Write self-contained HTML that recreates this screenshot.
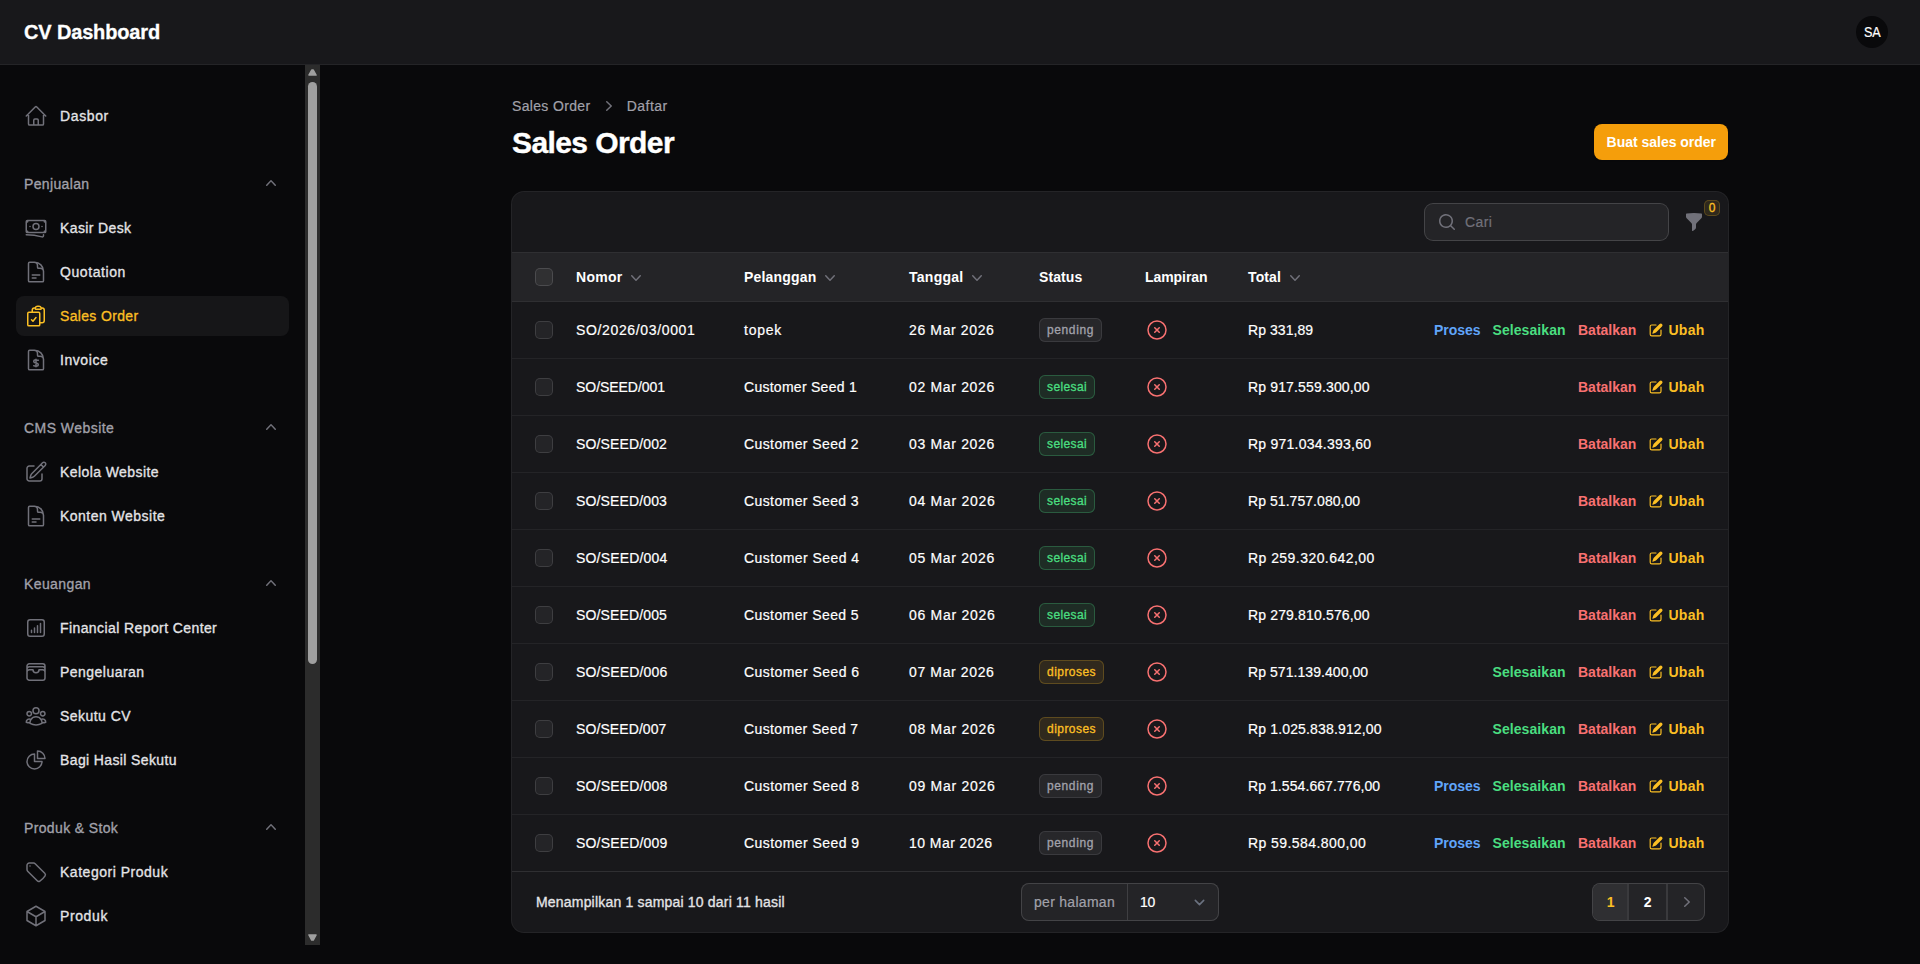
<!DOCTYPE html>
<html lang="id">
<head>
<meta charset="utf-8">
<title>Sales Order - CV Dashboard</title>
<style>
*{box-sizing:border-box;margin:0;padding:0}
html,body{width:1920px;height:964px;overflow:hidden;background:#09090b}
body{font-family:"Liberation Sans",sans-serif;font-size:14px;line-height:20px;color:#fff;position:relative;-webkit-text-stroke:.2px currentColor}
svg{display:block}
.t{display:inline-block;white-space:nowrap}
.md{-webkit-text-stroke:.32px currentColor}
.btn,.th,.a,.b7{-webkit-text-stroke:0}
.brand{-webkit-text-stroke:.3px currentColor}
.title{-webkit-text-stroke:.4px currentColor}

/* topbar */
.topbar{position:absolute;left:0;top:0;width:1920px;height:64px;background:#18181b;box-shadow:0 1px 0 0 #242427}
.brand{position:absolute;left:24px;top:20px;font-size:20px;line-height:24px;font-weight:700;color:#fff}
.avatar{position:absolute;left:1856px;top:16px;width:32px;height:32px;border-radius:50%;background:#09090b;color:#fff;font-size:14px;line-height:32px;text-align:center}

/* sidebar */
.sidebar{position:absolute;left:0;top:65px;width:305px;height:899px;background:#09090b}
.sb-track{position:absolute;left:305px;top:65px;width:15px;height:880px;background:#2c2c2c}
.sb-thumb{position:absolute;left:3px;top:17px;width:9px;height:582px;border-radius:5px;background:#9f9f9f}
.nav-item{position:absolute;left:16px;width:273px;height:40px;border-radius:8px}
.nav-item.active{background:#161618}
.nav-item svg{position:absolute;left:8px;top:8px;width:24px;height:24px;color:#71717a;fill:none;stroke:currentColor;stroke-width:1.5;stroke-linecap:round;stroke-linejoin:round}
.nav-item .t{position:absolute;left:44px;top:10px;color:#e4e4e7;font-weight:400}
.nav-item.active svg{color:#fbbf24}
.nav-item.active .t{color:#fbbf24}
.nav-group{position:absolute;left:16px;width:273px;height:40px}
.nav-group .t{position:absolute;left:8px;top:10px;color:#a1a1aa}
.nav-group svg{position:absolute;left:245px;top:9px;width:20px;height:20px;fill:#71717a}

/* main */
.crumbs{position:absolute;left:512px;top:96px;height:20px;color:#a1a1aa}
.crumbs .t{position:absolute;top:0}
.crumbs svg{position:absolute;top:0;width:20px;height:20px;fill:#71717a}
.title{position:absolute;left:512px;top:125px;font-size:30px;line-height:36px;font-weight:700;color:#fff}
.btn{position:absolute;left:1594px;top:124px;width:134px;height:36px;border-radius:8px;background:#f59e0b;color:#fff;font-weight:700;text-align:center;line-height:36px;box-shadow:0 1px 2px rgba(0,0,0,.05)}

.card{position:absolute;left:512px;top:192px;width:1216px;height:740px;border-radius:12px;background:#18181b;box-shadow:0 0 0 1px #242427}
.hline{position:absolute;left:0;width:1216px;height:1px;background:#242427}
.hline.s{background:#2f2f32}
.thead{position:absolute;left:0;top:61px;width:1216px;height:48px;background:#242427}
.search{position:absolute;left:913px;top:12px;width:243px;height:36px;border-radius:8px;background:#242427;box-shadow:0 0 0 1px #444447}
.search svg{position:absolute;left:12px;top:8px;width:20px;height:20px;fill:#71717a}
.search .t{position:absolute;left:40px;top:8px;color:#71717a;font-size:14px}
.filter{position:absolute;left:1172px;top:20px;width:20px;height:20px;fill:#71717a}
.fbadge{position:absolute;left:1192px;top:8px;width:16px;height:16px;border-radius:5px;background:#2f291c;box-shadow:inset 0 0 0 1px #5c4a1e;color:#fbbf24;font-size:12px;line-height:16px;text-align:center}
.cb{position:absolute;left:24px;width:16px;height:16px;border-radius:4px;background:#242427;box-shadow:0 0 0 1px #3e3e41}
.thead .cb{top:16px;background:#303032;box-shadow:0 0 0 1px #4b4b4e}
.th{position:absolute;top:14px;font-weight:700;color:#fff}
.thead svg{position:absolute;top:15px;width:20px;height:20px;fill:#71717a}
.row{position:absolute;left:0;width:1216px;height:56px}
.row .cb{top:20px}
.row .c{position:absolute;top:18px;color:#fff}
.badge{position:absolute;left:527px;top:16px;height:24px;border-radius:6px;font-size:12px;line-height:24px;padding:0 8px}
.b-gray{background:#27272a;color:#a1a1aa;box-shadow:inset 0 0 0 1px #3a3a3e}
.b-green{background:#1e2c25;color:#4ade80;box-shadow:inset 0 0 0 1px #2a5b3f}
.b-amber{background:#30291d;color:#fbbf24;box-shadow:inset 0 0 0 1px #5e4b1f}
.xc{position:absolute;left:633px;top:16px;width:24px;height:24px;fill:none;stroke:#f87171;stroke-width:1.5;stroke-linecap:round;stroke-linejoin:round}
.a{position:absolute;top:18px;font-weight:700}
.a.blue{color:#60a5fa}.a.green{color:#4ade80}.a.red{color:#f87171}.a.amber{color:#fbbf24}
.pen{position:absolute;left:1136px;top:20px;width:16px;height:16px;fill:#fbbf24}
.foot .t{position:absolute}
.perpage{position:absolute;left:509px;top:691px;width:198px;height:38px;border-radius:8px;background:#242427;box-shadow:inset 0 0 0 1px #434346}
.pager{position:absolute;left:1080px;top:691px;width:113px;height:38px;border-radius:8px;background:#242427;box-shadow:inset 0 0 0 1px #434346}
</style>
</head>
<body>
<div class="topbar">
<div class="brand"><span class="t" style="letter-spacing:-0.151px">CV Dashboard</span></div>
<div class="avatar"><span class="t" style="font-size:14px;transform:scaleX(.9)">SA</span></div>
</div>
<div class="sidebar">
<div class="nav-item" style="top:31px"><svg viewBox="0 0 24 24"><path d="M2.25 12l8.954-8.955c.44-.439 1.152-.439 1.591 0L21.75 12M4.5 9.75v10.125c0 .621.504 1.125 1.125 1.125H9.75v-4.875c0-.621.504-1.125 1.125-1.125h2.25c.621 0 1.125.504 1.125 1.125V21h4.125c.621 0 1.125-.504 1.125-1.125V9.75M8.25 21h8.25"/></svg><span class="t md" style="letter-spacing:0.627px">Dasbor</span></div>
<div class="nav-group" style="top:99px"><span class="t md" style="letter-spacing:0.347px">Penjualan</span><svg viewBox="0 0 20 20"><path fill-rule="evenodd" clip-rule="evenodd" d="M14.77 12.79a.75.75 0 01-1.06-.02L10 8.832 6.29 12.77a.75.75 0 11-1.08-1.04l4.25-4.5a.75.75 0 011.08 0l4.25 4.5a.75.75 0 01-.02 1.06z"/></svg></div>
<div class="nav-item" style="top:143px"><svg viewBox="0 0 24 24"><path d="M2.25 18.75a60.07 60.07 0 0115.797 2.101c.727.198 1.453-.342 1.453-1.096V18.75M3.75 4.5v.75A.75.75 0 013 6h-.75m0 0v-.375c0-.621.504-1.125 1.125-1.125H20.25M2.25 6v9m18-10.5v.75c0 .414.336.75.75.75h.75m-1.5-1.5h.375c.621 0 1.125.504 1.125 1.125v9.75c0 .621-.504 1.125-1.125 1.125h-.375m1.5-1.5H21a.75.75 0 00-.75.75v.75m0 0H3.75m0 0h-.375a1.125 1.125 0 01-1.125-1.125V15m1.5 1.5v-.75A.75.75 0 003 15h-.75M15 10.5a3 3 0 11-6 0 3 3 0 016 0zm3 0h.008v.008H18V10.5zm-12 0h.008v.008H6V10.5z"/></svg><span class="t md" style="letter-spacing:0.381px">Kasir Desk</span></div>
<div class="nav-item" style="top:187px"><svg viewBox="0 0 24 24"><path d="M19.5 14.25v-2.625a3.375 3.375 0 00-3.375-3.375h-1.5A1.125 1.125 0 0113.5 7.125v-1.5a3.375 3.375 0 00-3.375-3.375H8.25m0 12.75h7.5m-7.5 3H12M10.5 2.25H5.625c-.621 0-1.125.504-1.125 1.125v17.25c0 .621.504 1.125 1.125 1.125h12.75c.621 0 1.125-.504 1.125-1.125V11.25a9 9 0 00-9-9z"/></svg><span class="t md" style="letter-spacing:0.587px">Quotation</span></div>
<div class="nav-item active" style="top:231px"><svg viewBox="0 0 24 24"><path d="M11.35 3.836c-.065.21-.1.433-.1.664 0 .414.336.75.75.75h4.5a.75.75 0 00.75-.75 2.25 2.25 0 00-.1-.664m-5.8 0A2.251 2.251 0 0113.5 2.25H15c1.012 0 1.867.668 2.15 1.586m-5.8 0c-.376.023-.75.05-1.124.08C9.095 4.01 8.25 4.973 8.25 6.108V8.25m8.9-4.414c.376.023.75.05 1.124.08 1.131.094 1.976 1.057 1.976 2.192V16.5A2.25 2.25 0 0118 18.75h-2.25m-7.5-10.5H4.875c-.621 0-1.125.504-1.125 1.125v11.25c0 .621.504 1.125 1.125 1.125h9.75c.621 0 1.125-.504 1.125-1.125V18.75m-7.5-10.5h6.375c.621 0 1.125.504 1.125 1.125v9.375m-8.25-3l1.5 1.5 3-3.75"/></svg><span class="t md" style="letter-spacing:0.336px">Sales Order</span></div>
<div class="nav-item" style="top:275px"><svg viewBox="0 0 24 24"><path d="M19.5 14.25v-2.625a3.375 3.375 0 00-3.375-3.375h-1.5A1.125 1.125 0 0113.5 7.125v-1.5a3.375 3.375 0 00-3.375-3.375H8.25m3.75 9v7.5m2.25-6.466a9.016 9.016 0 00-3.461-.203c-.536.072-.974.478-1.021 1.017a4.559 4.559 0 00-.018.402c0 .464.336.844.775.994l2.95 1.012c.44.15.775.53.775.994 0 .136-.006.27-.018.402-.047.539-.485.945-1.021 1.017a9.077 9.077 0 01-3.461-.203M10.5 2.25H5.625c-.621 0-1.125.504-1.125 1.125v17.25c0 .621.504 1.125 1.125 1.125h12.75c.621 0 1.125-.504 1.125-1.125V11.25a9 9 0 00-9-9z"/></svg><span class="t md" style="letter-spacing:0.563px">Invoice</span></div>
<div class="nav-group" style="top:343px"><span class="t md" style="letter-spacing:0.452px">CMS Website</span><svg viewBox="0 0 20 20"><path fill-rule="evenodd" clip-rule="evenodd" d="M14.77 12.79a.75.75 0 01-1.06-.02L10 8.832 6.29 12.77a.75.75 0 11-1.08-1.04l4.25-4.5a.75.75 0 011.08 0l4.25 4.5a.75.75 0 01-.02 1.06z"/></svg></div>
<div class="nav-item" style="top:387px"><svg viewBox="0 0 24 24"><path d="M16.862 4.487l1.687-1.688a1.875 1.875 0 112.652 2.652L10.582 16.07a4.5 4.5 0 01-1.897 1.13L6 18l.8-2.685a4.5 4.5 0 011.13-1.897l8.932-8.931zm0 0L19.5 7.125M18 14v4.75A2.25 2.25 0 0115.75 21H5.25A2.25 2.25 0 013 18.75V8.25A2.25 2.25 0 015.25 6H10"/></svg><span class="t md" style="letter-spacing:0.419px">Kelola Website</span></div>
<div class="nav-item" style="top:431px"><svg viewBox="0 0 24 24"><path d="M19.5 14.25v-2.625a3.375 3.375 0 00-3.375-3.375h-1.5A1.125 1.125 0 0113.5 7.125v-1.5a3.375 3.375 0 00-3.375-3.375H8.25m0 12.75h7.5m-7.5 3H12M10.5 2.25H5.625c-.621 0-1.125.504-1.125 1.125v17.25c0 .621.504 1.125 1.125 1.125h12.75c.621 0 1.125-.504 1.125-1.125V11.25a9 9 0 00-9-9z"/></svg><span class="t md" style="letter-spacing:0.479px">Konten Website</span></div>
<div class="nav-group" style="top:499px"><span class="t md" style="letter-spacing:0.395px">Keuangan</span><svg viewBox="0 0 20 20"><path fill-rule="evenodd" clip-rule="evenodd" d="M14.77 12.79a.75.75 0 01-1.06-.02L10 8.832 6.29 12.77a.75.75 0 11-1.08-1.04l4.25-4.5a.75.75 0 011.08 0l4.25 4.5a.75.75 0 01-.02 1.06z"/></svg></div>
<div class="nav-item" style="top:543px"><svg viewBox="0 0 24 24"><path d="M7.5 14.25v2.25m3-4.5v4.5m3-6.75v6.75m3-9v9M6 20.25h12A2.25 2.25 0 0020.25 18V6A2.25 2.25 0 0018 3.75H6A2.25 2.25 0 003.75 6v12A2.25 2.25 0 006 20.25z"/></svg><span class="t md" style="letter-spacing:0.406px">Financial Report Center</span></div>
<div class="nav-item" style="top:587px"><svg viewBox="0 0 24 24"><path d="M21 12a2.25 2.25 0 00-2.25-2.25H15a3 3 0 11-6 0H5.25A2.25 2.25 0 003 12m18 0v6a2.25 2.25 0 01-2.25 2.25H5.25A2.25 2.25 0 013 18v-6m18 0V9M3 12V9m18 0a2.25 2.25 0 00-2.25-2.25H5.25A2.25 2.25 0 003 9m18 0V6a2.25 2.25 0 00-2.25-2.25H5.25A2.25 2.25 0 003 6v3"/></svg><span class="t md" style="letter-spacing:0.472px">Pengeluaran</span></div>
<div class="nav-item" style="top:631px"><svg viewBox="0 0 24 24"><path d="M18 18.72a9.094 9.094 0 003.741-.479 3 3 0 00-4.682-2.72m.94 3.198l.001.031c0 .225-.012.447-.037.666A11.944 11.944 0 0112 21c-2.17 0-4.207-.576-5.963-1.584A6.062 6.062 0 016 18.719m12 0a5.971 5.971 0 00-.941-3.197m0 0A5.995 5.995 0 0012 12.75a5.995 5.995 0 00-5.058 2.772m0 0a3 3 0 00-4.681 2.72 8.986 8.986 0 003.74.477m.94-3.197a5.971 5.971 0 00-.94 3.197M15 6.75a3 3 0 11-6 0 3 3 0 016 0zm6 3a2.25 2.25 0 11-4.5 0 2.25 2.25 0 014.5 0zm-13.5 0a2.25 2.25 0 11-4.5 0 2.25 2.25 0 014.5 0z"/></svg><span class="t md" style="letter-spacing:0.451px">Sekutu CV</span></div>
<div class="nav-item" style="top:675px"><svg viewBox="0 0 24 24"><path d="M10.5 6a7.5 7.5 0 107.5 7.5h-7.5V6zM13.5 10.5H21A7.5 7.5 0 0013.5 3v7.5z"/></svg><span class="t md" style="letter-spacing:0.381px">Bagi Hasil Sekutu</span></div>
<div class="nav-group" style="top:743px"><span class="t md" style="letter-spacing:0.362px">Produk &amp; Stok</span><svg viewBox="0 0 20 20"><path fill-rule="evenodd" clip-rule="evenodd" d="M14.77 12.79a.75.75 0 01-1.06-.02L10 8.832 6.29 12.77a.75.75 0 11-1.08-1.04l4.25-4.5a.75.75 0 011.08 0l4.25 4.5a.75.75 0 01-.02 1.06z"/></svg></div>
<div class="nav-item" style="top:787px"><svg viewBox="0 0 24 24"><path d="M9.568 3H5.25A2.25 2.25 0 003 5.25v4.318c0 .597.237 1.17.659 1.591l9.581 9.581c.699.699 1.78.872 2.607.33a18.095 18.095 0 005.223-5.223c.542-.827.369-1.908-.33-2.607L11.16 3.66A2.25 2.25 0 009.568 3zM6 6h.008v.008H6V6z"/></svg><span class="t md" style="letter-spacing:0.52px">Kategori Produk</span></div>
<div class="nav-item" style="top:831px"><svg viewBox="0 0 24 24"><path d="M21 7.5l-9-5.25L3 7.5m18 0l-9 5.25m9-5.25v9l-9 5.25M3 7.5l9 5.25M3 7.5v9l9 5.25m0-9v9"/></svg><span class="t md" style="letter-spacing:0.607px">Produk</span></div>
</div>
<div class="sb-track"><div class="sb-thumb"></div>
<svg style="position:absolute;left:3px;top:3px;width:9px;height:9px" viewBox="0 0 9 9"><path d="M3.7 2H5.3L8.1 7.1H0.9z" fill="#9f9f9f" stroke="#9f9f9f" stroke-width="1.4" stroke-linejoin="round"/></svg>
<svg style="position:absolute;left:3px;top:869px;width:9px;height:9px" viewBox="0 0 9 9"><path d="M0.9 0.9H8.1L5.3 6.1H3.7z" fill="#9f9f9f" stroke="#9f9f9f" stroke-width="1.4" stroke-linejoin="round"/></svg>
</div>
<div class="crumbs"><span class="t" style="left:0;letter-spacing:0.336px">Sales Order</span><svg style="left:86.7px" viewBox="0 0 20 20"><path fill-rule="evenodd" clip-rule="evenodd" d="M7.21 14.77a.75.75 0 01.02-1.06L11.168 10 7.23 6.29a.75.75 0 111.04-1.08l4.5 4.25a.75.75 0 010 1.08l-4.5 4.25a.75.75 0 01-1.06-.02z"/></svg><span class="t" style="left:114.7px;letter-spacing:0.479px">Daftar</span></div>
<div class="title"><span class="t" style="letter-spacing:-0.585px">Sales Order</span></div>
<div class="btn"><span class="t" style="margin-left:.6px;letter-spacing:-0.02px">Buat sales order</span></div>
<div class="card">
<div class="search"><svg viewBox="0 0 20 20"><path fill-rule="evenodd" clip-rule="evenodd" d="M9 3.5a5.5 5.5 0 100 11 5.5 5.5 0 000-11zM2 9a7 7 0 1112.452 4.391l3.328 3.329a.75.75 0 11-1.06 1.06l-3.329-3.328A7 7 0 012 9z"/></svg><span class="t" style="letter-spacing:0.432px">Cari</span></div>
<svg class="filter" viewBox="0 0 20 20"><path fill-rule="evenodd" clip-rule="evenodd" d="M2.628 1.601C5.028 1.206 7.49 1 10 1s4.973.206 7.372.601a.75.75 0 01.628.74v2.288a2.25 2.25 0 01-.659 1.59l-4.682 4.683a2.25 2.25 0 00-.659 1.59v3.037c0 .684-.31 1.33-.844 1.757l-1.937 1.55A.75.75 0 018 18.25v-5.757a2.25 2.25 0 00-.659-1.591L2.659 6.22A2.25 2.25 0 012 4.629V2.34a.75.75 0 01.628-.74z"/></svg>
<div class="fbadge"><span class="t md">0</span></div>
<div class="hline s" style="top:60px"></div>
<div class="thead"><div class="cb"></div><span class="th" style="left:64px"><span class="t" style="letter-spacing:0.275px">Nomor</span></span><svg style="left:114px" viewBox="0 0 20 20"><path fill-rule="evenodd" clip-rule="evenodd" d="M5.23 7.21a.75.75 0 011.06.02L10 11.168l3.71-3.938a.75.75 0 111.08 1.04l-4.25 4.5a.75.75 0 01-1.08 0l-4.25-4.5a.75.75 0 01.02-1.06z"/></svg><span class="th" style="left:232px"><span class="t" style="letter-spacing:0.189px">Pelanggan</span></span><svg style="left:308px" viewBox="0 0 20 20"><path fill-rule="evenodd" clip-rule="evenodd" d="M5.23 7.21a.75.75 0 011.06.02L10 11.168l3.71-3.938a.75.75 0 111.08 1.04l-4.25 4.5a.75.75 0 01-1.08 0l-4.25-4.5a.75.75 0 01.02-1.06z"/></svg><span class="th" style="left:397px"><span class="t" style="letter-spacing:0.266px">Tanggal</span></span><svg style="left:455px" viewBox="0 0 20 20"><path fill-rule="evenodd" clip-rule="evenodd" d="M5.23 7.21a.75.75 0 011.06.02L10 11.168l3.71-3.938a.75.75 0 111.08 1.04l-4.25 4.5a.75.75 0 01-1.08 0l-4.25-4.5a.75.75 0 01.02-1.06z"/></svg><span class="th" style="left:527px"><span class="t" style="letter-spacing:0.101px">Status</span></span><span class="th" style="left:633px"><span class="t" style="letter-spacing:-0.064px">Lampiran</span></span><span class="th" style="left:736px"><span class="t" style="letter-spacing:0.119px">Total</span></span><svg style="left:773px" viewBox="0 0 20 20"><path fill-rule="evenodd" clip-rule="evenodd" d="M5.23 7.21a.75.75 0 011.06.02L10 11.168l3.71-3.938a.75.75 0 111.08 1.04l-4.25 4.5a.75.75 0 01-1.08 0l-4.25-4.5a.75.75 0 01.02-1.06z"/></svg></div>
<div class="hline s" style="top:109px"></div>
<div class="row" style="top:110px"><div class="cb"></div><span class="c" style="left:64px"><span class="t" style="letter-spacing:0.649px">SO/2026/03/0001</span></span><span class="c" style="left:232px"><span class="t" style="letter-spacing:0.75px">topek</span></span><span class="c" style="left:397px"><span class="t" style="letter-spacing:0.626px">26 Mar 2026</span></span><span class="badge b-gray"><span class="t md" style="letter-spacing:0.612px">pending</span></span><svg class="xc" viewBox="0 0 24 24"><path d="M9.75 9.75l4.5 4.5m0-4.5l-4.5 4.5M21 12a9 9 0 11-18 0 9 9 0 0118 0z"/></svg><span class="c" style="left:736px"><span class="t" style="letter-spacing:0.066px">Rp 331,89</span></span><span class="a blue" style="left:922px"><span class="t" style="letter-spacing:-0.034px">Proses</span></span><span class="a green" style="left:980.5px"><span class="t" style="letter-spacing:0.081px">Selesaikan</span></span><span class="a red" style="left:1066px"><span class="t" style="letter-spacing:0.005px">Batalkan</span></span><svg class="pen" viewBox="0 0 20 20"><path fill-rule="evenodd" clip-rule="evenodd" d="M5.433 13.917l1.262-3.155A4 4 0 017.58 9.42l6.92-6.918a2.121 2.121 0 013 3l-6.92 6.918c-.383.383-.84.685-1.343.886l-3.154 1.262a.5.5 0 01-.65-.65zM3.5 5.75c0-.69.56-1.25 1.25-1.25H10A.75.75 0 0010 3H4.75A2.75 2.75 0 002 5.75v9.5A2.75 2.75 0 004.75 18h9.5A2.75 2.75 0 0017 15.25V10a.75.75 0 00-1.5 0v5.25c0 .69-.56 1.25-1.25 1.25h-9.5c-.69 0-1.25-.56-1.25-1.25v-9.5z"/></svg><span class="a amber" style="left:1156.5px"><span class="t" style="letter-spacing:0.25px">Ubah</span></span></div>
<div class="hline" style="top:166px"></div>
<div class="row" style="top:167px"><div class="cb"></div><span class="c" style="left:64px"><span class="t" style="letter-spacing:-0.045px">SO/SEED/001</span></span><span class="c" style="left:232px"><span class="t" style="letter-spacing:0.27px">Customer Seed 1</span></span><span class="c" style="left:397px"><span class="t" style="letter-spacing:0.672px">02 Mar 2026</span></span><span class="badge b-green"><span class="t md" style="letter-spacing:0.377px">selesai</span></span><svg class="xc" viewBox="0 0 24 24"><path d="M9.75 9.75l4.5 4.5m0-4.5l-4.5 4.5M21 12a9 9 0 11-18 0 9 9 0 0118 0z"/></svg><span class="c" style="left:736px"><span class="t" style="letter-spacing:0.152px">Rp 917.559.300,00</span></span><span class="a red" style="left:1066px"><span class="t" style="letter-spacing:0.005px">Batalkan</span></span><svg class="pen" viewBox="0 0 20 20"><path fill-rule="evenodd" clip-rule="evenodd" d="M5.433 13.917l1.262-3.155A4 4 0 017.58 9.42l6.92-6.918a2.121 2.121 0 013 3l-6.92 6.918c-.383.383-.84.685-1.343.886l-3.154 1.262a.5.5 0 01-.65-.65zM3.5 5.75c0-.69.56-1.25 1.25-1.25H10A.75.75 0 0010 3H4.75A2.75 2.75 0 002 5.75v9.5A2.75 2.75 0 004.75 18h9.5A2.75 2.75 0 0017 15.25V10a.75.75 0 00-1.5 0v5.25c0 .69-.56 1.25-1.25 1.25h-9.5c-.69 0-1.25-.56-1.25-1.25v-9.5z"/></svg><span class="a amber" style="left:1156.5px"><span class="t" style="letter-spacing:0.25px">Ubah</span></span></div>
<div class="hline" style="top:223px"></div>
<div class="row" style="top:224px"><div class="cb"></div><span class="c" style="left:64px"><span class="t" style="letter-spacing:0.136px">SO/SEED/002</span></span><span class="c" style="left:232px"><span class="t" style="letter-spacing:0.403px">Customer Seed 2</span></span><span class="c" style="left:397px"><span class="t" style="letter-spacing:0.672px">03 Mar 2026</span></span><span class="badge b-green"><span class="t md" style="letter-spacing:0.377px">selesai</span></span><svg class="xc" viewBox="0 0 24 24"><path d="M9.75 9.75l4.5 4.5m0-4.5l-4.5 4.5M21 12a9 9 0 11-18 0 9 9 0 0118 0z"/></svg><span class="c" style="left:736px"><span class="t" style="letter-spacing:0.241px">Rp 971.034.393,60</span></span><span class="a red" style="left:1066px"><span class="t" style="letter-spacing:0.005px">Batalkan</span></span><svg class="pen" viewBox="0 0 20 20"><path fill-rule="evenodd" clip-rule="evenodd" d="M5.433 13.917l1.262-3.155A4 4 0 017.58 9.42l6.92-6.918a2.121 2.121 0 013 3l-6.92 6.918c-.383.383-.84.685-1.343.886l-3.154 1.262a.5.5 0 01-.65-.65zM3.5 5.75c0-.69.56-1.25 1.25-1.25H10A.75.75 0 0010 3H4.75A2.75 2.75 0 002 5.75v9.5A2.75 2.75 0 004.75 18h9.5A2.75 2.75 0 0017 15.25V10a.75.75 0 00-1.5 0v5.25c0 .69-.56 1.25-1.25 1.25h-9.5c-.69 0-1.25-.56-1.25-1.25v-9.5z"/></svg><span class="a amber" style="left:1156.5px"><span class="t" style="letter-spacing:0.25px">Ubah</span></span></div>
<div class="hline" style="top:280px"></div>
<div class="row" style="top:281px"><div class="cb"></div><span class="c" style="left:64px"><span class="t" style="letter-spacing:0.136px">SO/SEED/003</span></span><span class="c" style="left:232px"><span class="t" style="letter-spacing:0.403px">Customer Seed 3</span></span><span class="c" style="left:397px"><span class="t" style="letter-spacing:0.717px">04 Mar 2026</span></span><span class="badge b-green"><span class="t md" style="letter-spacing:0.377px">selesai</span></span><svg class="xc" viewBox="0 0 24 24"><path d="M9.75 9.75l4.5 4.5m0-4.5l-4.5 4.5M21 12a9 9 0 11-18 0 9 9 0 0118 0z"/></svg><span class="c" style="left:736px"><span class="t" style="letter-spacing:0.054px">Rp 51.757.080,00</span></span><span class="a red" style="left:1066px"><span class="t" style="letter-spacing:0.005px">Batalkan</span></span><svg class="pen" viewBox="0 0 20 20"><path fill-rule="evenodd" clip-rule="evenodd" d="M5.433 13.917l1.262-3.155A4 4 0 017.58 9.42l6.92-6.918a2.121 2.121 0 013 3l-6.92 6.918c-.383.383-.84.685-1.343.886l-3.154 1.262a.5.5 0 01-.65-.65zM3.5 5.75c0-.69.56-1.25 1.25-1.25H10A.75.75 0 0010 3H4.75A2.75 2.75 0 002 5.75v9.5A2.75 2.75 0 004.75 18h9.5A2.75 2.75 0 0017 15.25V10a.75.75 0 00-1.5 0v5.25c0 .69-.56 1.25-1.25 1.25h-9.5c-.69 0-1.25-.56-1.25-1.25v-9.5z"/></svg><span class="a amber" style="left:1156.5px"><span class="t" style="letter-spacing:0.25px">Ubah</span></span></div>
<div class="hline" style="top:337px"></div>
<div class="row" style="top:338px"><div class="cb"></div><span class="c" style="left:64px"><span class="t" style="letter-spacing:0.182px">SO/SEED/004</span></span><span class="c" style="left:232px"><span class="t" style="letter-spacing:0.436px">Customer Seed 4</span></span><span class="c" style="left:397px"><span class="t" style="letter-spacing:0.672px">05 Mar 2026</span></span><span class="badge b-green"><span class="t md" style="letter-spacing:0.377px">selesai</span></span><svg class="xc" viewBox="0 0 24 24"><path d="M9.75 9.75l4.5 4.5m0-4.5l-4.5 4.5M21 12a9 9 0 11-18 0 9 9 0 0118 0z"/></svg><span class="c" style="left:736px"><span class="t" style="letter-spacing:0.447px">Rp 259.320.642,00</span></span><span class="a red" style="left:1066px"><span class="t" style="letter-spacing:0.005px">Batalkan</span></span><svg class="pen" viewBox="0 0 20 20"><path fill-rule="evenodd" clip-rule="evenodd" d="M5.433 13.917l1.262-3.155A4 4 0 017.58 9.42l6.92-6.918a2.121 2.121 0 013 3l-6.92 6.918c-.383.383-.84.685-1.343.886l-3.154 1.262a.5.5 0 01-.65-.65zM3.5 5.75c0-.69.56-1.25 1.25-1.25H10A.75.75 0 0010 3H4.75A2.75 2.75 0 002 5.75v9.5A2.75 2.75 0 004.75 18h9.5A2.75 2.75 0 0017 15.25V10a.75.75 0 00-1.5 0v5.25c0 .69-.56 1.25-1.25 1.25h-9.5c-.69 0-1.25-.56-1.25-1.25v-9.5z"/></svg><span class="a amber" style="left:1156.5px"><span class="t" style="letter-spacing:0.25px">Ubah</span></span></div>
<div class="hline" style="top:394px"></div>
<div class="row" style="top:395px"><div class="cb"></div><span class="c" style="left:64px"><span class="t" style="letter-spacing:0.136px">SO/SEED/005</span></span><span class="c" style="left:232px"><span class="t" style="letter-spacing:0.403px">Customer Seed 5</span></span><span class="c" style="left:397px"><span class="t" style="letter-spacing:0.717px">06 Mar 2026</span></span><span class="badge b-green"><span class="t md" style="letter-spacing:0.377px">selesai</span></span><svg class="xc" viewBox="0 0 24 24"><path d="M9.75 9.75l4.5 4.5m0-4.5l-4.5 4.5M21 12a9 9 0 11-18 0 9 9 0 0118 0z"/></svg><span class="c" style="left:736px"><span class="t" style="letter-spacing:0.152px">Rp 279.810.576,00</span></span><span class="a red" style="left:1066px"><span class="t" style="letter-spacing:0.005px">Batalkan</span></span><svg class="pen" viewBox="0 0 20 20"><path fill-rule="evenodd" clip-rule="evenodd" d="M5.433 13.917l1.262-3.155A4 4 0 017.58 9.42l6.92-6.918a2.121 2.121 0 013 3l-6.92 6.918c-.383.383-.84.685-1.343.886l-3.154 1.262a.5.5 0 01-.65-.65zM3.5 5.75c0-.69.56-1.25 1.25-1.25H10A.75.75 0 0010 3H4.75A2.75 2.75 0 002 5.75v9.5A2.75 2.75 0 004.75 18h9.5A2.75 2.75 0 0017 15.25V10a.75.75 0 00-1.5 0v5.25c0 .69-.56 1.25-1.25 1.25h-9.5c-.69 0-1.25-.56-1.25-1.25v-9.5z"/></svg><span class="a amber" style="left:1156.5px"><span class="t" style="letter-spacing:0.25px">Ubah</span></span></div>
<div class="hline" style="top:451px"></div>
<div class="row" style="top:452px"><div class="cb"></div><span class="c" style="left:64px"><span class="t" style="letter-spacing:0.182px">SO/SEED/006</span></span><span class="c" style="left:232px"><span class="t" style="letter-spacing:0.436px">Customer Seed 6</span></span><span class="c" style="left:397px"><span class="t" style="letter-spacing:0.626px">07 Mar 2026</span></span><span class="badge b-amber"><span class="t md" style="letter-spacing:0.455px">diproses</span></span><svg class="xc" viewBox="0 0 24 24"><path d="M9.75 9.75l4.5 4.5m0-4.5l-4.5 4.5M21 12a9 9 0 11-18 0 9 9 0 0118 0z"/></svg><span class="c" style="left:736px"><span class="t" style="letter-spacing:0.064px">Rp 571.139.400,00</span></span><span class="a green" style="left:980.5px"><span class="t" style="letter-spacing:0.081px">Selesaikan</span></span><span class="a red" style="left:1066px"><span class="t" style="letter-spacing:0.005px">Batalkan</span></span><svg class="pen" viewBox="0 0 20 20"><path fill-rule="evenodd" clip-rule="evenodd" d="M5.433 13.917l1.262-3.155A4 4 0 017.58 9.42l6.92-6.918a2.121 2.121 0 013 3l-6.92 6.918c-.383.383-.84.685-1.343.886l-3.154 1.262a.5.5 0 01-.65-.65zM3.5 5.75c0-.69.56-1.25 1.25-1.25H10A.75.75 0 0010 3H4.75A2.75 2.75 0 002 5.75v9.5A2.75 2.75 0 004.75 18h9.5A2.75 2.75 0 0017 15.25V10a.75.75 0 00-1.5 0v5.25c0 .69-.56 1.25-1.25 1.25h-9.5c-.69 0-1.25-.56-1.25-1.25v-9.5z"/></svg><span class="a amber" style="left:1156.5px"><span class="t" style="letter-spacing:0.25px">Ubah</span></span></div>
<div class="hline" style="top:508px"></div>
<div class="row" style="top:509px"><div class="cb"></div><span class="c" style="left:64px"><span class="t" style="letter-spacing:0.091px">SO/SEED/007</span></span><span class="c" style="left:232px"><span class="t" style="letter-spacing:0.37px">Customer Seed 7</span></span><span class="c" style="left:397px"><span class="t" style="letter-spacing:0.717px">08 Mar 2026</span></span><span class="badge b-amber"><span class="t md" style="letter-spacing:0.455px">diproses</span></span><svg class="xc" viewBox="0 0 24 24"><path d="M9.75 9.75l4.5 4.5m0-4.5l-4.5 4.5M21 12a9 9 0 11-18 0 9 9 0 0118 0z"/></svg><span class="c" style="left:736px"><span class="t" style="letter-spacing:0.154px">Rp 1.025.838.912,00</span></span><span class="a green" style="left:980.5px"><span class="t" style="letter-spacing:0.081px">Selesaikan</span></span><span class="a red" style="left:1066px"><span class="t" style="letter-spacing:0.005px">Batalkan</span></span><svg class="pen" viewBox="0 0 20 20"><path fill-rule="evenodd" clip-rule="evenodd" d="M5.433 13.917l1.262-3.155A4 4 0 017.58 9.42l6.92-6.918a2.121 2.121 0 013 3l-6.92 6.918c-.383.383-.84.685-1.343.886l-3.154 1.262a.5.5 0 01-.65-.65zM3.5 5.75c0-.69.56-1.25 1.25-1.25H10A.75.75 0 0010 3H4.75A2.75 2.75 0 002 5.75v9.5A2.75 2.75 0 004.75 18h9.5A2.75 2.75 0 0017 15.25V10a.75.75 0 00-1.5 0v5.25c0 .69-.56 1.25-1.25 1.25h-9.5c-.69 0-1.25-.56-1.25-1.25v-9.5z"/></svg><span class="a amber" style="left:1156.5px"><span class="t" style="letter-spacing:0.25px">Ubah</span></span></div>
<div class="hline" style="top:565px"></div>
<div class="row" style="top:566px"><div class="cb"></div><span class="c" style="left:64px"><span class="t" style="letter-spacing:0.182px">SO/SEED/008</span></span><span class="c" style="left:232px"><span class="t" style="letter-spacing:0.436px">Customer Seed 8</span></span><span class="c" style="left:397px"><span class="t" style="letter-spacing:0.717px">09 Mar 2026</span></span><span class="badge b-gray"><span class="t md" style="letter-spacing:0.612px">pending</span></span><svg class="xc" viewBox="0 0 24 24"><path d="M9.75 9.75l4.5 4.5m0-4.5l-4.5 4.5M21 12a9 9 0 11-18 0 9 9 0 0118 0z"/></svg><span class="c" style="left:736px"><span class="t" style="letter-spacing:0.075px">Rp 1.554.667.776,00</span></span><span class="a blue" style="left:922px"><span class="t" style="letter-spacing:-0.034px">Proses</span></span><span class="a green" style="left:980.5px"><span class="t" style="letter-spacing:0.081px">Selesaikan</span></span><span class="a red" style="left:1066px"><span class="t" style="letter-spacing:0.005px">Batalkan</span></span><svg class="pen" viewBox="0 0 20 20"><path fill-rule="evenodd" clip-rule="evenodd" d="M5.433 13.917l1.262-3.155A4 4 0 017.58 9.42l6.92-6.918a2.121 2.121 0 013 3l-6.92 6.918c-.383.383-.84.685-1.343.886l-3.154 1.262a.5.5 0 01-.65-.65zM3.5 5.75c0-.69.56-1.25 1.25-1.25H10A.75.75 0 0010 3H4.75A2.75 2.75 0 002 5.75v9.5A2.75 2.75 0 004.75 18h9.5A2.75 2.75 0 0017 15.25V10a.75.75 0 00-1.5 0v5.25c0 .69-.56 1.25-1.25 1.25h-9.5c-.69 0-1.25-.56-1.25-1.25v-9.5z"/></svg><span class="a amber" style="left:1156.5px"><span class="t" style="letter-spacing:0.25px">Ubah</span></span></div>
<div class="hline" style="top:622px"></div>
<div class="row" style="top:623px"><div class="cb"></div><span class="c" style="left:64px"><span class="t" style="letter-spacing:0.182px">SO/SEED/009</span></span><span class="c" style="left:232px"><span class="t" style="letter-spacing:0.436px">Customer Seed 9</span></span><span class="c" style="left:397px"><span class="t" style="letter-spacing:0.445px">10 Mar 2026</span></span><span class="badge b-gray"><span class="t md" style="letter-spacing:0.612px">pending</span></span><svg class="xc" viewBox="0 0 24 24"><path d="M9.75 9.75l4.5 4.5m0-4.5l-4.5 4.5M21 12a9 9 0 11-18 0 9 9 0 0118 0z"/></svg><span class="c" style="left:736px"><span class="t" style="letter-spacing:0.429px">Rp 59.584.800,00</span></span><span class="a blue" style="left:922px"><span class="t" style="letter-spacing:-0.034px">Proses</span></span><span class="a green" style="left:980.5px"><span class="t" style="letter-spacing:0.081px">Selesaikan</span></span><span class="a red" style="left:1066px"><span class="t" style="letter-spacing:0.005px">Batalkan</span></span><svg class="pen" viewBox="0 0 20 20"><path fill-rule="evenodd" clip-rule="evenodd" d="M5.433 13.917l1.262-3.155A4 4 0 017.58 9.42l6.92-6.918a2.121 2.121 0 013 3l-6.92 6.918c-.383.383-.84.685-1.343.886l-3.154 1.262a.5.5 0 01-.65-.65zM3.5 5.75c0-.69.56-1.25 1.25-1.25H10A.75.75 0 0010 3H4.75A2.75 2.75 0 002 5.75v9.5A2.75 2.75 0 004.75 18h9.5A2.75 2.75 0 0017 15.25V10a.75.75 0 00-1.5 0v5.25c0 .69-.56 1.25-1.25 1.25h-9.5c-.69 0-1.25-.56-1.25-1.25v-9.5z"/></svg><span class="a amber" style="left:1156.5px"><span class="t" style="letter-spacing:0.25px">Ubah</span></span></div>
<div class="hline s" style="top:679px"></div>
<div class="foot"><span class="t md" style="left:24px;top:700px;color:#e4e4e7;letter-spacing:0.19px">Menampilkan 1 sampai 10 dari 11 hasil</span></div>
<div class="perpage">
<div style="position:absolute;left:106px;top:1px;width:1px;height:36px;background:#3f3f42"></div>
<span class="t" style="position:absolute;left:13px;top:9px;color:#a1a1aa;letter-spacing:0.288px">per halaman</span>
<span class="t" style="position:absolute;left:119px;top:9px;color:#fff;letter-spacing:-0.289px">10</span>
<svg style="position:absolute;left:168px;top:8.8px;width:21px;height:21px" viewBox="0 0 20 20"><path d="M6 8l4 4 4-4" fill="none" stroke="#6b7280" stroke-width="1.5" stroke-linecap="round" stroke-linejoin="round"/></svg>
</div>
<div class="pager">
<div style="position:absolute;left:1px;top:1px;width:34px;height:36px;border-radius:7px 0 0 7px;background:#2f2f32"></div>
<div style="position:absolute;left:35px;top:1px;width:2px;height:36px;background:#3a3a3d"></div>
<div style="position:absolute;left:74px;top:1px;width:2px;height:36px;background:#3a3a3d"></div>
<span class="t b7" style="position:absolute;left:14.7px;top:9px;font-weight:700;color:#fbbf24">1</span>
<span class="t b7" style="position:absolute;left:51.8px;top:9px;font-weight:700;color:#fff">2</span>
<svg style="position:absolute;left:85px;top:9px;width:20px;height:20px;fill:#71717a" viewBox="0 0 20 20"><path fill-rule="evenodd" clip-rule="evenodd" d="M7.21 14.77a.75.75 0 01.02-1.06L11.168 10 7.23 6.29a.75.75 0 111.04-1.08l4.5 4.25a.75.75 0 010 1.08l-4.5 4.25a.75.75 0 01-1.06-.02z"/></svg>
</div>
</div>
</body>
</html>
